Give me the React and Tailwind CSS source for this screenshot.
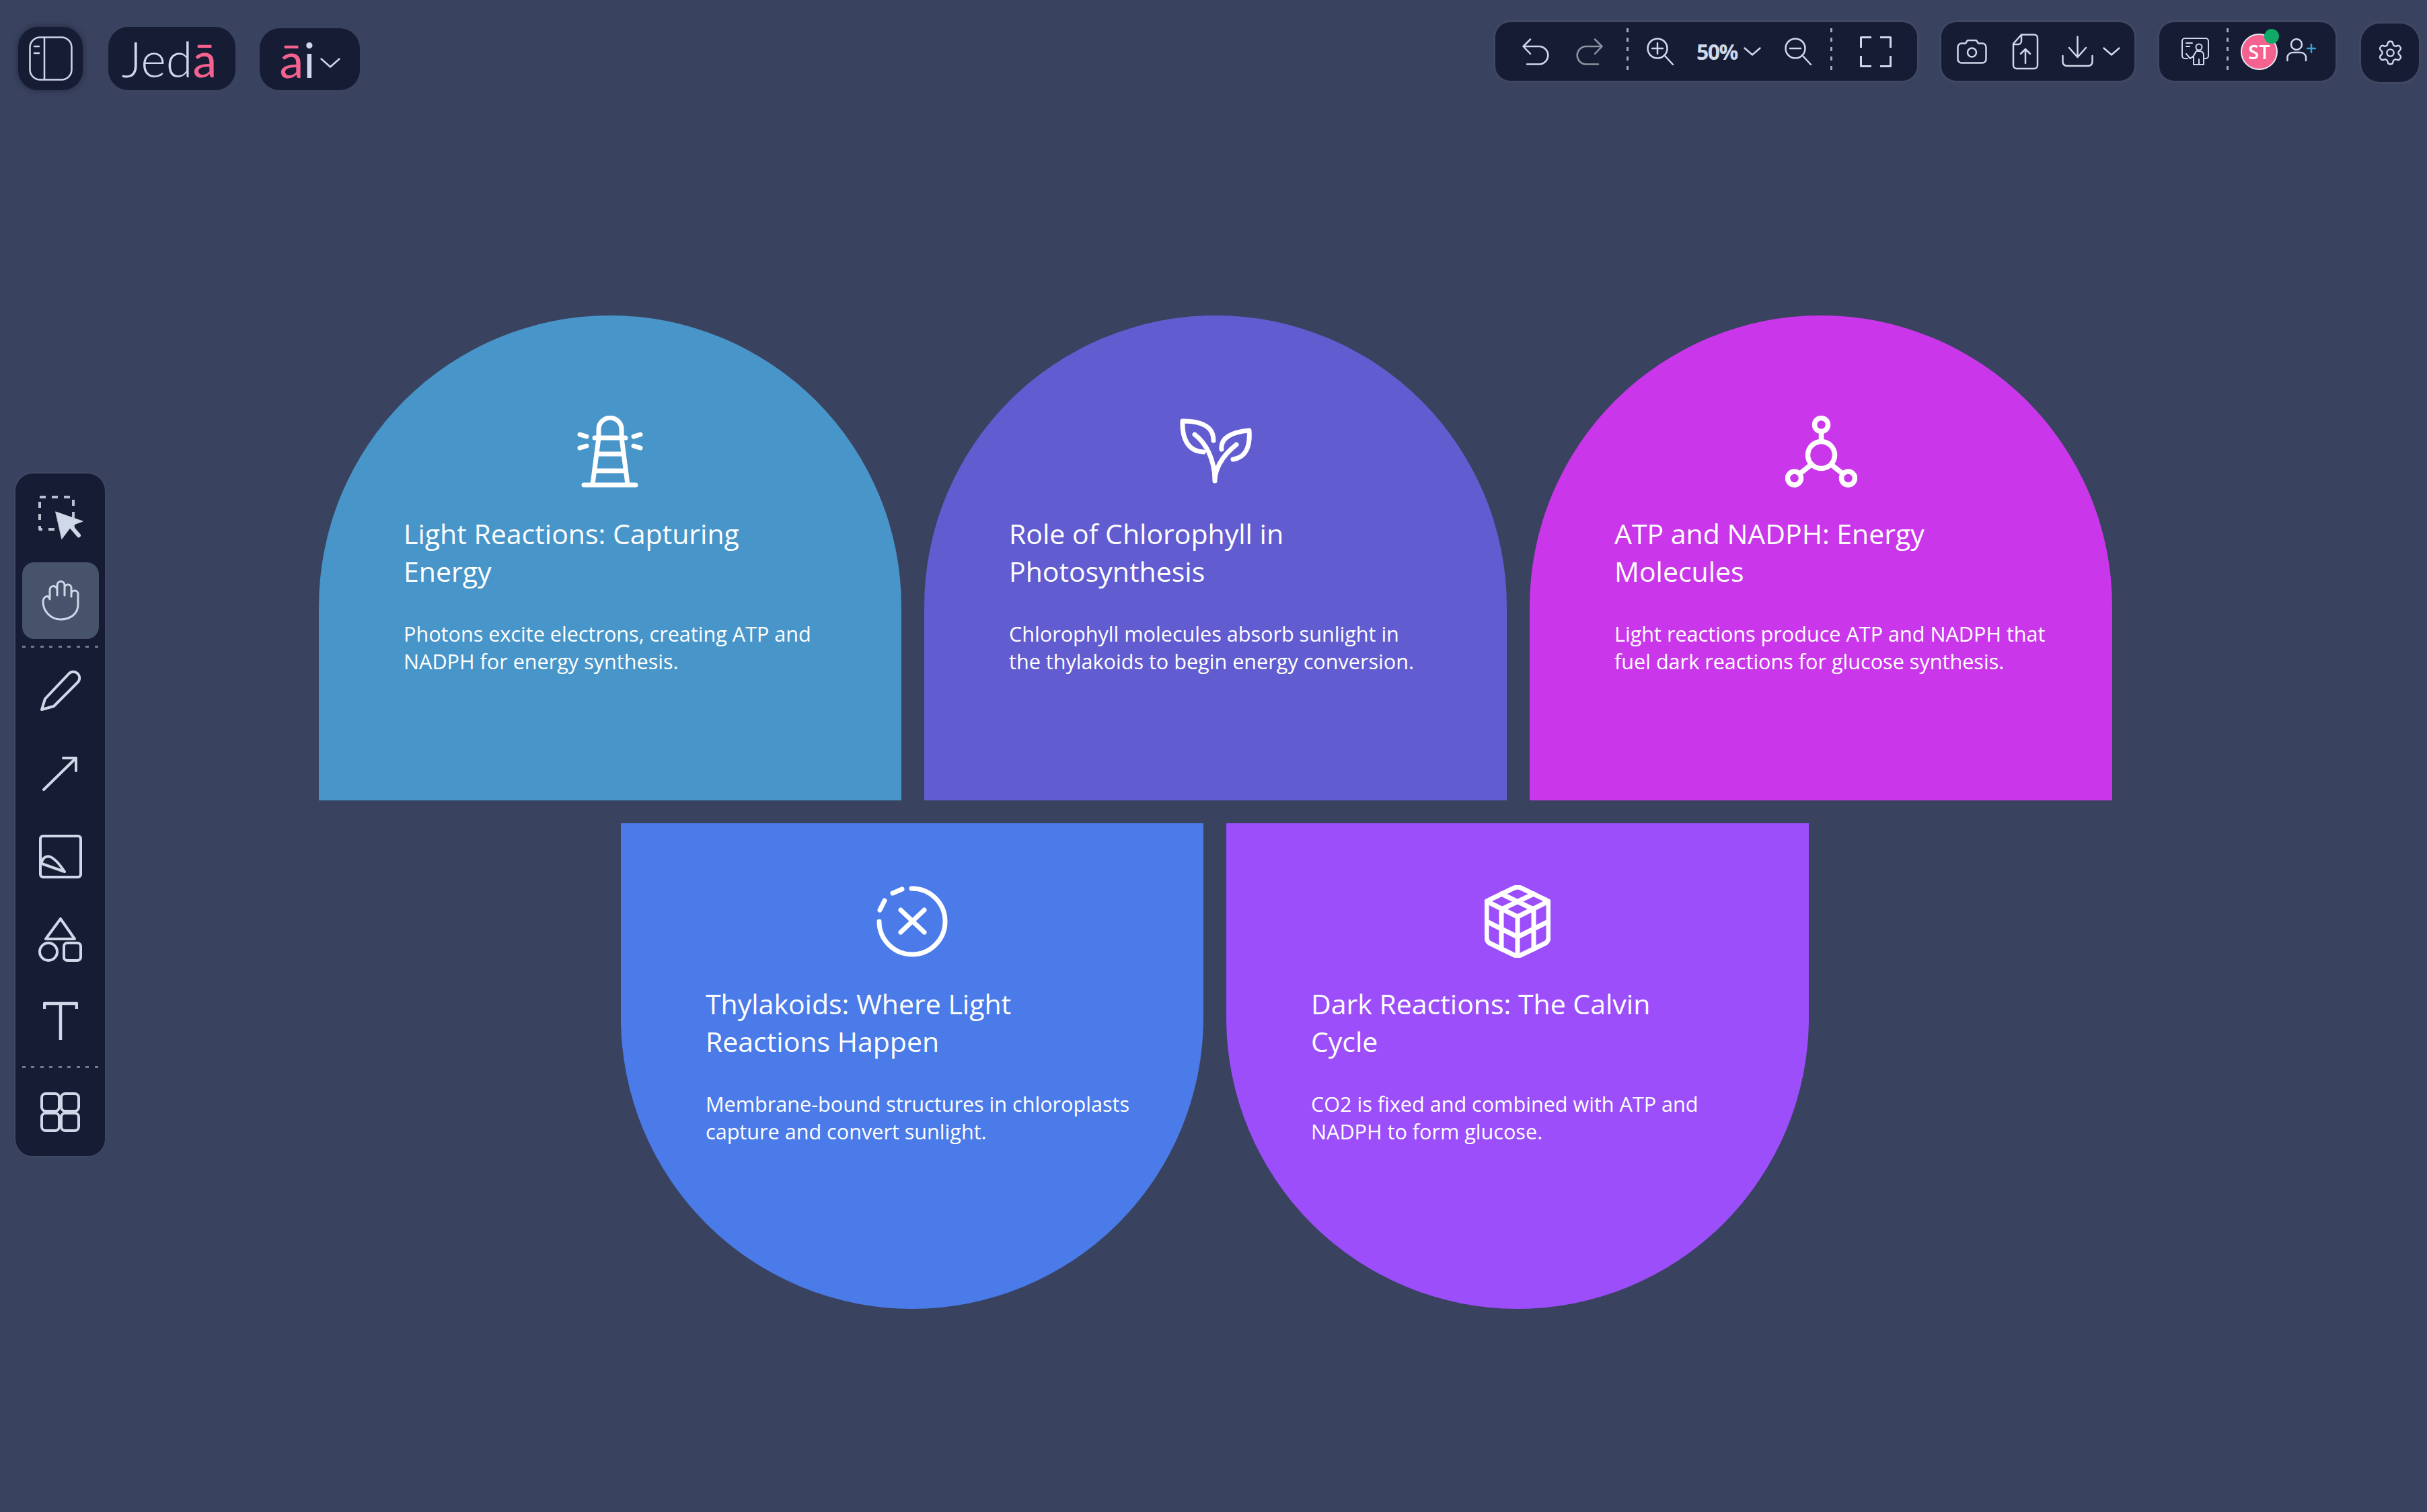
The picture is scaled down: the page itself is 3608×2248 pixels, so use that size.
import React from "react";
import { Settings } from "lucide-react";

const S = ({ w, h, sw = 3, c = "#cfd8e8", children, className = "" }) => (
  <svg width={w} height={h} viewBox={`0 0 ${w} ${h}`} fill="none" stroke={c} strokeWidth={sw} strokeLinecap="round" strokeLinejoin="round" className={`shrink-0 ${className}`}>
    {children}
  </svg>
);

const Chevron = ({ w = 26, h = 13, className = "" }) => (
  <S w={w} h={h} sw={2.5} className={className}><path d={`M1.5 1.5 L${w / 2} ${h - 1.5} L${w - 1.5} 1.5`} /></S>
);

const VDots = ({ className = "" }) => <div className={`w-[3px] self-stretch my-[9px] bg-[repeating-linear-gradient(180deg,#a3abbd_0_6px,transparent_6px_14px)] ${className}`} />;
const HDots = ({ className = "" }) => <div className={`h-[3px] w-[114px] bg-[repeating-linear-gradient(90deg,#737b92_0_5px,transparent_5px_13.5px)] ${className}`} />;

const Panel = ({ className = "", children }) => (
  <div className={`flex items-center h-[87px] rounded-[22px] bg-[#161c34] shadow-[0_0_0_3px_rgba(255,255,255,0.03)] ${className}`}>{children}</div>
);

const cards = {
  light: {
    title: "Light Reactions: Capturing Energy",
    body: "Photons excite electrons, creating ATP and NADPH for energy synthesis.",
    icon: (
      <S w={98} h={107} sw={7} c="#fff">
        <path d="M10 103 H87 M23 102 L32 33 M75 102 L66 33 M26 33 H72 M32 33 V20 C32 9 42 3 49 3 C56 3 66 9 66 20 V33 M30 57 H68 M27 82 H71 M4 28 L14 31 M4 48 L14 45 M84 31 L94 28 M84 45 L94 48" />
      </S>
    ),
  },
  chloro: {
    title: "Role of Chlorophyll in Photosynthesis",
    body: <>Chlorophyll molecules absorb sunlight in<br />the thylakoids to begin energy conversion.</>,
    icon: (
      <S w={107} h={98} sw={7} c="#fff">
        <path d="M50 33 C50 14 36 4 4 4 C3 30 12 49 35 50 M22 24 C38 36 52 60 52 93 M62 46 C60 30 76 20 103 18 C105 42 98 58 79 61 M52 93 C52 78 60 58 84 39" />
      </S>
    ),
  },
  atp: {
    title: "ATP and NADPH: Energy Molecules",
    body: "Light reactions produce ATP and NADPH that fuel dark reactions for glucose synthesis.",
    icon: (
      <S w={107} h={107} sw={7.5} c="#fff">
        <circle cx="53.5" cy="58.5" r="20" />
        <circle cx="53.5" cy="13.5" r="10" />
        <circle cx="13.5" cy="93" r="10" />
        <circle cx="93.5" cy="93" r="10" />
        <path d="M53.5 24 V38 M22 86 L37 74 M85 86 L70 74" />
      </S>
    ),
  },
  thyla: {
    title: "Thylakoids: Where Light Reactions Happen",
    body: "Membrane-bound structures in chloroplasts capture and convert sunlight.",
    icon: (
      <S w={106} h={107} sw={7} c="#fff">
        <path d="M52 4 A49 49 0 1 1 4 53 M5 36 L12 22 M24 11 L38 5 M36 36 L71 69 M71 36 L36 69" />
      </S>
    ),
  },
  dark: {
    title: "Dark Reactions: The Calvin Cycle",
    body: "CO2 is fixed and combined with ATP and NADPH to form glucose.",
    icon: (
      <S w={98} h={108} sw={7} c="#fff">
        <path d="M42 5 Q49 1 56 5 L91 22 Q95 24 95 31 V78 Q95 83 91 86 L56 103 Q49 107 42 103 L7 86 Q3 83 3 78 V31 Q3 24 7 22 Z" />
        <path d="M3 24 L49 47 L95 24 M49 47 V106 M25 13 L73 36 M73 13 L25 36 M25 36 V95 M73 36 V95 M3 54 L49 77 L95 54" />
      </S>
    ),
  },
};

const Card = ({ data, className }) => (
  <div className={`w-[866px] flex flex-col text-white font-['Open_Sans',sans-serif] ${className}`}>
    <div className="h-[108px] flex items-center justify-center shrink-0">{data.icon}</div>
    <h2 className="mt-[40px] ml-[126px] w-[570px] text-[41px] leading-[56px] font-normal">{data.title}</h2>
    <p className="mt-[45px] ml-[126px] w-[650px] text-[30.6px] leading-[41px]">{data.body}</p>
  </div>
);

export default function App() {
  return (
    <div className="w-[3608px] h-[2248px] overflow-hidden bg-[#39425e] font-['Open_Sans',sans-serif]">
      <header className="h-[120px] flex justify-between items-start">
        <div className="flex items-start pt-[40px] pl-[27px]">
          <div className="w-[96px] h-[94px] rounded-[30px] bg-[#161c34] shadow-[0_0_8px_rgba(10,14,30,0.5)] flex items-center justify-center">
            <S w={65} h={66} sw={2.5}>
              <rect x="1.5" y="1.5" width="62" height="63" rx="15" />
              <path d="M23 2 V64 M8 15 H15 M8 25 H15" />
            </S>
          </div>
          <div className="ml-[38px] w-[189px] h-[94px] pr-[8px] rounded-[30px] bg-[#161c34] flex items-center justify-center font-['Lato',sans-serif] font-light text-[72px] leading-none text-[#cfd8e8]">
            Jed<span className="text-[#f5628f] font-normal">ā</span>
          </div>
          <div className="ml-[36px] mt-[2px] w-[149px] h-[92px] rounded-[30px] bg-[#161c34] flex items-center justify-center font-['Lato',sans-serif] text-[72px] leading-none text-[#cfd8e8]">
            <span className="text-[#f5628f]">ā</span>i
            <Chevron w={30} h={15} className="ml-[7px] mt-[10px]" />
          </div>
        </div>
        <div className="flex items-start pt-[33px] pr-[12px]">
          <Panel className="w-[627px] pl-[40px]">
            <S w={43} h={40} sw={2.5}><path d="M12 1.5 L1.5 12 L12 23 M1.5 12 H27 A14 13.5 0 0 1 27 38.5 H7" /></S>
            <S w={43} h={40} sw={2.5} c="#8f939f" className="ml-[34px]"><path d="M31 1.5 L41.5 12 L31 23 M41.5 12 H16 A14 13.5 0 0 0 16 38.5 H36" /></S>
            <VDots className="ml-[35px]" />
            <S w={41} h={41} sw={2.5} className="ml-[27px]"><circle cx="16" cy="16" r="14.5" /><path d="M27 27 L39 40 M16 8 V24 M8 16 H24" /></S>
            <span className="ml-[33px] w-[60px] text-[32px] leading-none font-bold tracking-[-1.6px] text-[#cfd8e8]">50%</span>
            <Chevron className="ml-[10px]" />
            <S w={41} h={41} sw={2.5} className="ml-[35px]"><circle cx="16" cy="16" r="14.5" /><path d="M27 27 L39 40 M8 16 H24" /></S>
            <VDots className="ml-[27px]" />
            <S w={47} h={46} sw={3} className="ml-[41px]"><path d="M1.5 17 V1.5 H17 M30 1.5 H45.5 V17 M1.5 29 V44.5 H17 M30 44.5 H45.5 V29" strokeLinecap="butt" /></S>
          </Panel>
          <Panel className="ml-[36px] w-[287px] pl-[23px]">
            <S w={45} h={37} sw={2.5}>
              <path d="M7 6.5 H13 L16 2 H29 L32 6.5 H38 A5.5 5.5 0 0 1 43.5 12 V30 A5.5 5.5 0 0 1 38 35.5 H7 A5.5 5.5 0 0 1 1.5 30 V12 A5.5 5.5 0 0 1 7 6.5 Z" />
              <circle cx="22.5" cy="20" r="6.5" />
            </S>
            <S w={40} h={54} sw={2.5} className="ml-[37px]">
              <path d="M14 1.5 H33 A5 5 0 0 1 38 6.5 V47 A5 5 0 0 1 33 52 H7 A5 5 0 0 1 2 47 V15 Z M14 1.5 V11 A5 5 0 0 1 9 16 H2" />
              <path d="M20 44 V23 M13 30 L20 23 L27 30" />
            </S>
            <S w={47} h={47} sw={2.5} className="ml-[34px]">
              <path d="M23.5 1.5 V31 M11 18 L23.5 32 L36 18 M1.5 30 V39 A6 6 0 0 0 7.5 45 H39.5 A6 6 0 0 0 45.5 39 V30" />
            </S>
            <Chevron className="ml-[14px]" />
          </Panel>
          <Panel className="ml-[37px] w-[262px] pl-[33px]">
            <S w={41} h={41} sw={2}>
              <path d="M9 31 H5 A4 4 0 0 1 1 27 V5 A4 4 0 0 1 5 1 H36 A4 4 0 0 1 40 5 V27 A4 4 0 0 1 36 31 H33" />
              <circle cx="26" cy="14" r="4.5" />
              <path d="M7 8 H16 M7 13 H12 M18 40 V27 L13 31 L7 24 M33 40 V26 C33 22 30 20 26 20 H22 L18 27 M18 40 H33 M26 32 V40" />
            </S>
            <VDots className="ml-[26px]" />
            <div className="relative ml-[18px] w-[55px] h-[54px] rounded-full bg-[#f5628f] border-2 border-[#e6ebf4] flex items-center justify-center text-white text-[29px] font-semibold leading-none">
              ST
              <span className="absolute -top-[9px] left-[33px] w-[22px] h-[22px] rounded-full bg-[#0fa968]" />
            </div>
            <S w={44} h={36} sw={2.5} className="ml-[13px] -mt-[6px]">
              <circle cx="15" cy="10" r="8" />
              <path d="M1.5 34 V28 A9 9 0 0 1 10.5 22 H19.5 A9 9 0 0 1 29 28 V34" />
              <path d="M37 10 V22 M31 16 H43" stroke="#3f9ed8" />
            </S>
          </Panel>
          <Panel className="ml-[38px] w-[86px] h-[86px] mt-[2px] rounded-[28px] justify-center">
            <Settings size={41} strokeWidth={1.4} color="#cfd8e8" />
          </Panel>
        </div>
      </header>

      <div className="flex items-start">
        <aside className="mt-[584px] ml-[23px] w-[133px] h-[1015px] shrink-0 rounded-[26px] bg-[#161c34] shadow-[0_0_0_2px_rgba(255,255,255,0.03)] flex flex-col items-center">
          <S w={66} h={65} sw={4} c="#b9c0cf" className="mt-[33px]">
            <rect x="2" y="2" width="50" height="48" strokeDasharray="9 9" strokeLinecap="butt" />
            <path d="M26 24 L66 38 L50 44 L35 64 Z" fill="#cfd8e8" stroke="#cfd8e8" strokeWidth="1" />
            <path d="M47 44 L60 59" stroke="#cfd8e8" strokeWidth="6" />
          </S>
          <div className="mt-[34px] w-[114px] h-[114px] rounded-[18px] bg-[#47526b] flex items-center justify-center">
            <S w={56} h={60}>
              <path d="M23 22 V7 A5.5 5.5 0 0 1 34 7 V22 M34 22 V11 A5 5 0 0 1 44 11 V24 M44 20 A5 5 0 0 1 54 20 V36 C54 50 42 58 28 58 C14 58 2 46 2 32 C2 24 10 20 12 28 V14 A5.5 5.5 0 0 1 23 14 V22" />
            </S>
          </div>
          <HDots className="mt-[10px]" />
          <S w={60} h={62} sw={4} className="mt-[32px]">
            <path d="M2 60 L7 44 L42 7 A9 9 0 0 1 56 19 L20 55 Z" />
          </S>
          <S w={53} h={52} sw={4} className="mt-[67px]"><path d="M2 50 L50 3 M31 3 H50 V22" /></S>
          <S w={64} h={65} sw={4} className="mt-[65px]">
            <rect x="2" y="2" width="60" height="61" rx="4" />
            <path d="M4 43 C4 36 10 30 17 33 C24 36 32 46 38 55 Z" />
          </S>
          <S w={65} h={66} sw={4} className="mt-[58px]">
            <path d="M33 2 L54 32 H11 Z" />
            <circle cx="15" cy="51" r="13" />
            <rect x="38" y="38" width="25" height="26" rx="5" />
          </S>
          <S w={52} h={57} sw={4.5} className="mt-[59px]"><path d="M2 11 V3 H50 V11 M26 3 V57" strokeLinecap="butt" /></S>
          <HDots className="mt-[39px]" />
          <S w={59} h={59} sw={4} className="mt-[36px]">
            <rect x="2" y="2" width="26" height="26" rx="6" />
            <rect x="31" y="2" width="26" height="26" rx="6" />
            <rect x="2" y="31" width="26" height="26" rx="6" />
            <rect x="31" y="31" width="26" height="26" rx="6" />
          </S>
        </aside>

        <main className="ml-[318px] mt-[349px] flex flex-col gap-[34px]">
          <div className="flex gap-[34px]">
            <Card data={cards.light} className="h-[721px] pt-[148px] rounded-t-[433px] bg-[#4895c9]" />
            <Card data={cards.chloro} className="h-[721px] pt-[148px] rounded-t-[433px] bg-[#625cd1]" />
            <Card data={cards.atp} className="h-[721px] pt-[148px] rounded-t-[433px] bg-[#ca37ea]" />
          </div>
          <div className="flex gap-[34px] ml-[449px]">
            <Card data={cards.thyla} className="h-[722px] pt-[92px] rounded-b-[433px] bg-[#4b7be8]" />
            <Card data={cards.dark} className="h-[722px] pt-[92px] rounded-b-[433px] bg-[#9b4efa]" />
          </div>
        </main>
      </div>
    </div>
  );
}
